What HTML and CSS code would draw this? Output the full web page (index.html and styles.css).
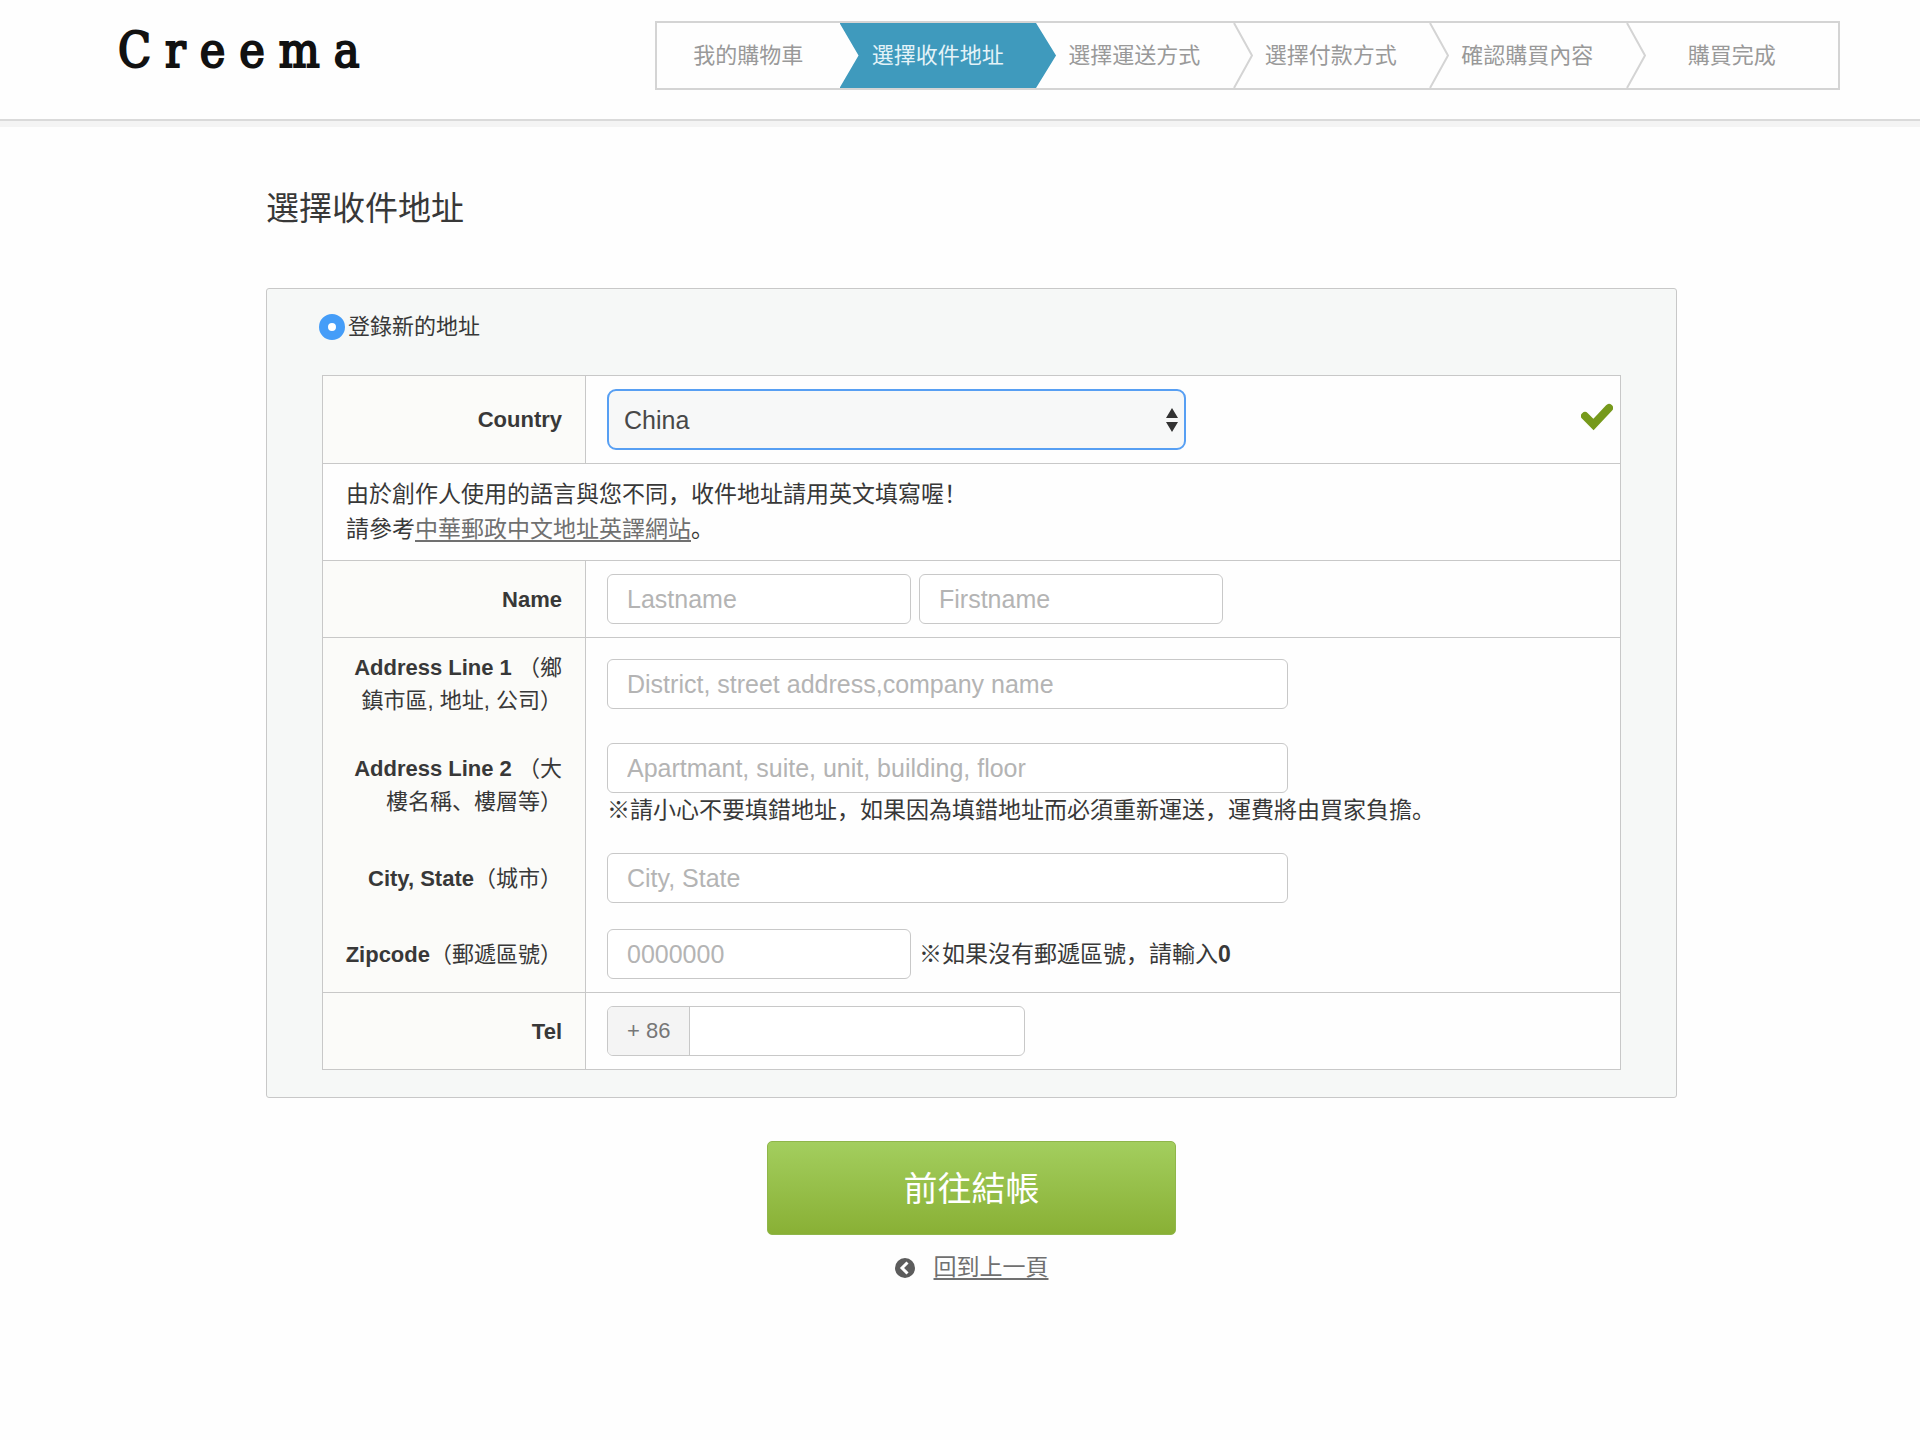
FILE: index.html
```html
<!DOCTYPE html>
<html lang="zh">
<head>
<meta charset="utf-8">
<meta name="viewport" content="width=device-width, initial-scale=1">
<title>Creema - 選擇收件地址</title>
<link rel="stylesheet" href="styles.css">
</head>
<body>
<header class="site-header">
  <a class="logo" href="#">Creema</a>
  <ol class="steps">
    <li class="step">我的購物車</li>
    <li class="step step-current" aria-current="step">選擇收件地址</li>
    <li class="step">選擇運送方式<svg class="chevron" viewBox="0 0 20 65" aria-hidden="true"><path d="M1 0 19 32.500 1 65"/></svg></li>
    <li class="step">選擇付款方式<svg class="chevron" viewBox="0 0 20 65" aria-hidden="true"><path d="M1 0 19 32.500 1 65"/></svg></li>
    <li class="step">確認購買內容<svg class="chevron" viewBox="0 0 20 65" aria-hidden="true"><path d="M1 0 19 32.500 1 65"/></svg></li>
    <li class="step">購買完成</li>
  </ol>
</header>

<main class="page">
  <h1 class="page-title">選擇收件地址</h1>
  <form>
    <section class="panel">
      <label class="choice"><input class="radio" type="radio" name="address" checked>登錄新的地址</label>
      <table class="form-table">
        <tr class="ruled">
          <th scope="row"><label for="country"><b>Country</b></label></th>
          <td>
            <div class="field-row">
              <div class="select-wrap">
                <select class="select" id="country"><option>China</option></select>
                <svg class="select-arrows" viewBox="0 0 12 24" aria-hidden="true"><path d="M6 0 12 10H0zM6 24 0 14h12z"/></svg>
              </div>
              <svg class="valid-mark" viewBox="0 0 32 28" role="img" aria-label="OK"><path d="M4 13 12.500 21.500 28 5"/></svg>
            </div>
          </td>
        </tr>
        <tr class="ruled">
          <td class="notice" colspan="2">由於創作人使用的語言與您不同，收件地址請用英文填寫喔！<br>請參考<a class="text-link" href="#">中華郵政中文地址英譯網站</a>。</td>
        </tr>
        <tr class="ruled">
          <th scope="row"><label for="lastname"><b>Name</b></label></th>
          <td>
            <div class="inline-fields">
              <input class="input input-short" id="lastname" type="text" placeholder="Lastname">
              <input class="input input-short" type="text" placeholder="Firstname" aria-label="Firstname">
            </div>
          </td>
        </tr>
        <tr>
          <th scope="row"><label for="address1"><b>Address Line 1</b> <span>（鄉</span><span>鎮市區, 地址, 公司）</span></label></th>
          <td><input class="input input-long" id="address1" type="text" placeholder="District, street address,company name"></td>
        </tr>
        <tr>
          <th scope="row"><label for="address2"><b>Address Line 2</b> <span>（大</span><span>樓名稱、樓層等）</span></label></th>
          <td>
            <input class="input input-long" id="address2" type="text" placeholder="Apartmant, suite, unit, building, floor">
            <p class="hint">※請小心不要填錯地址，如果因為填錯地址而必須重新運送，運費將由買家負擔。</p>
          </td>
        </tr>
        <tr>
          <th scope="row"><label for="city"><b>City, State</b>（城市）</label></th>
          <td><input class="input input-long" id="city" type="text" placeholder="City, State"></td>
        </tr>
        <tr class="ruled">
          <th scope="row"><label for="zipcode"><b>Zipcode</b>（郵遞區號）</label></th>
          <td>
            <div class="inline-fields">
              <input class="input input-short" id="zipcode" type="text" placeholder="0000000">
              <p class="hint">※如果沒有郵遞區號，請輸入<b>0</b></p>
            </div>
          </td>
        </tr>
        <tr>
          <th scope="row"><label for="tel"><b>Tel</b></label></th>
          <td>
            <div class="tel-group">
              <span class="tel-code">+ 86</span>
              <input class="tel-input" id="tel" type="tel">
            </div>
          </td>
        </tr>
      </table>
    </section>
    <div class="actions">
      <button class="submit" type="submit">前往結帳</button>
      <div class="back">
        <svg class="back-icon" viewBox="0 0 20 20" aria-hidden="true"><circle cx="10" cy="10" r="10"/><path d="M12.500 4.500 7 10l5.500 5.500"/></svg>
        <a class="text-link" href="#">回到上一頁</a>
      </div>
    </div>
  </form>
</main>
</body>
</html>
```

FILE: styles.css
```css
* {
  box-sizing: border-box;
}

body {
  margin: 0;
  background: #fefefe;
  color: #383838;
  font-family: "Liberation Sans", "Noto Sans CJK SC", sans-serif;
  font-size: 22px;
  line-height: 33px;
}

/* Header */
.site-header {
  display: flex;
  align-items: flex-start;
  justify-content: space-between;
  padding: 21px 80px 29px 118px;
  border-bottom: 2px solid #dadada;
  box-shadow: 0 6px 0 #f4f4f4;
}

.logo {
  color: #111;
  font-family: "DejaVu Serif Condensed", "DejaVu Serif", serif;
  font-size: 48px;
  font-stretch: condensed;
  line-height: 58px;
  letter-spacing: 14px;
  text-decoration: none;
  -webkit-text-stroke: 2px #111;
}

.steps {
  display: grid;
  grid-template-columns: 183fr 197fr 197fr 197fr 197fr 213fr;
  width: 69%;
  max-width: 1185px;
  margin: 0;
  padding: 0;
  border: 2px solid #d4d4d4;
  list-style: none;
  color: #999;
}

.step {
  position: relative;
  height: 65px;
  line-height: 65px;
  text-align: center;
  white-space: nowrap;
}

.step-current {
  margin-right: -20px;
  padding-right: 20px;
  background: #3f9abd;
  color: #e4f3f8;
  clip-path: polygon(0 0, calc(100% - 20px) 0, 100% 50%, calc(100% - 20px) 100%, 0 100%, 19px 50%);
}

.chevron {
  position: absolute;
  top: 0;
  right: -20px;
  width: 20px;
  height: 65px;
  fill: none;
  stroke: #d4d4d4;
  stroke-width: 2;
}

/* Page */
.page {
  padding: 64px 243px 80px 266px;
}

.page-title {
  margin: 0 0 55px;
  font-size: 33px;
  font-weight: 400;
  line-height: 48px;
}

.panel {
  padding-bottom: 27px;
  border: 1px solid #c8c8c8;
  border-radius: 3px;
  background: #f6f8f7;
}

.choice {
  display: flex;
  align-items: center;
  gap: 3px;
  padding: 21px 52px 32px;
}

.radio {
  flex: none;
  width: 26px;
  height: 26px;
  margin: 0;
  border: 9px solid #459df8;
  border-radius: 50%;
  appearance: none;
  background: #fff;
}

/* Address table */
.form-table {
  width: calc(100% - 110px);
  margin: 0 55px;
  border: 1px solid #c8c8c8;
  border-spacing: 0;
  background: #fefefe;
}

.form-table th,
.form-table td {
  padding: 13px 7px 13px 21px;
  text-align: left;
  vertical-align: middle;
}

.form-table th {
  width: 263px;
  padding: 13px 23px 13px 18px;
  border-right: 1px solid #c8c8c8;
  background: #fbfbf9;
  font-weight: 400;
  text-align: right;
}

.form-table th label {
  display: block;
}

.ruled > th,
.ruled > td {
  border-bottom: 1px solid #c8c8c8;
}

.form-table .notice {
  padding-left: 23px;
  font-size: 23px;
  line-height: 35px;
}

.text-link {
  color: #707070;
  text-decoration: underline;
  text-underline-offset: 3px;
}

.field-row {
  display: flex;
  align-items: center;
  justify-content: space-between;
}

.select-wrap {
  position: relative;
  width: 579px;
}

.select {
  display: block;
  width: 100%;
  height: 61px;
  padding: 0 15px;
  border: 2px solid #579ff3;
  border-radius: 9px;
  outline: 0;
  appearance: none;
  background: #f7f8f8;
  color: #484848;
  font: 25px "Liberation Sans", sans-serif;
}

.select-arrows {
  position: absolute;
  top: 19px;
  right: 8px;
  width: 12px;
  height: 24px;
  fill: #333;
  pointer-events: none;
}

.valid-mark {
  width: 32px;
  height: 28px;
  margin-bottom: 6px;
  fill: none;
  stroke: #76991b;
  stroke-width: 8;
  stroke-linecap: round;
}

.input,
.tel-group {
  display: block;
  height: 50px;
  border: 1px solid #c8c8c8;
  border-radius: 6px;
  background: #fff;
}

.input {
  padding: 0 19px;
  color: #444;
  font: 25px "Liberation Sans", sans-serif;
}

.input::placeholder {
  color: #b4b4b4;
  opacity: 1;
}

.input-short {
  width: 304px;
}

.input-long {
  width: 681px;
}

.inline-fields {
  display: flex;
  align-items: center;
  gap: 8px;
}

.hint {
  margin: 0;
  font-size: 23px;
  line-height: 34px;
}

.tel-group {
  display: flex;
  width: 418px;
  overflow: hidden;
}

.tel-code {
  padding: 0 19px;
  border-right: 1px solid #c8c8c8;
  background: #f4f4f4;
  color: #777;
  line-height: 48px;
}

.tel-input {
  flex: 1;
  min-width: 0;
  padding: 0 19px;
  border: 0;
  background: transparent;
  font: 25px "Liberation Sans", sans-serif;
}

/* Actions */
.actions {
  display: flex;
  flex-direction: column;
  align-items: center;
  gap: 16px;
  padding-top: 43px;
}

.submit {
  width: 409px;
  height: 94px;
  padding: 0 0 4px;
  border: 1px solid #8fb64a;
  border-radius: 5px;
  background: linear-gradient(#a3ce5e, #89b035);
  color: #fff;
  font: 34px "Noto Sans CJK SC", sans-serif;
}

.back {
  display: flex;
  align-items: center;
  gap: 19px;
  font-size: 23px;
}

.back-icon {
  width: 20px;
  height: 20px;
  fill: #5c5c5c;
}

.back-icon path {
  fill: none;
  stroke: #fff;
  stroke-width: 3;
}
```
